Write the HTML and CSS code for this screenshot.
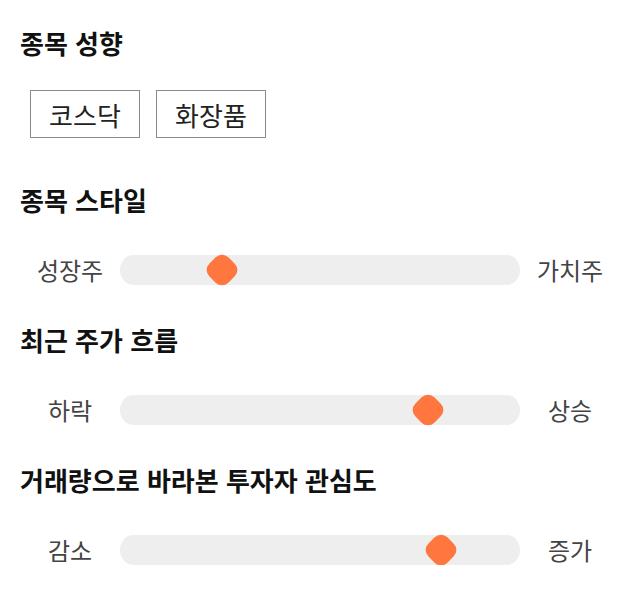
FILE: index.html
```html
<!DOCTYPE html>
<html lang="ko">
<head>
<meta charset="utf-8">
<title>종목 성향</title>
<link rel="stylesheet" href="styles.css">
</head>
<body>
<main class="page">
  <section class="block">
    <h2 class="title">종목 성향</h2>
    <div class="tags">
      <span class="tag">코스닥</span>
      <span class="tag">화장품</span>
    </div>
  </section>

  <section class="block block-gap">
    <h2 class="title">종목 스타일</h2>
    <div class="slider-row">
      <span class="label">성장주</span>
      <div class="track"><span class="thumb" style="left: 25.5%"></span></div>
      <span class="label">가치주</span>
    </div>
  </section>

  <section class="block">
    <h2 class="title">최근 주가 흐름</h2>
    <div class="slider-row">
      <span class="label">하락</span>
      <div class="track"><span class="thumb" style="left: 77%"></span></div>
      <span class="label">상승</span>
    </div>
  </section>

  <section class="block">
    <h2 class="title">거래량으로 바라본 투자자 관심도</h2>
    <div class="slider-row">
      <span class="label">감소</span>
      <div class="track"><span class="thumb" style="left: 80.25%"></span></div>
      <span class="label">증가</span>
    </div>
  </section>
</main>
</body>
</html>
```

FILE: styles.css
```css
html, body {
  margin: 0;
  padding: 0;
  background: #ffffff;
}

body {
  font-family: "Noto Sans CJK KR", "Noto Sans", sans-serif;
  color: #111111;
}

.page {
  display: flex;
  flex-direction: column;
  gap: 37px;
  padding: 25px 20px 0 20px;
}

.block {
  display: flex;
  flex-direction: column;
  gap: 37px;
}

.block-gap {
  margin-top: 7px;
}

.title {
  margin: 0;
  font-size: 26px;
  line-height: 36px;
  font-weight: 700;
  color: #111111;
}

.tags {
  display: flex;
  gap: 16px;
  padding-left: 10px;
  margin-top: -8px;
}

.tag {
  box-sizing: border-box;
  width: 110px;
  height: 48px;
  border: 1px solid #8a8a8a;
  display: flex;
  align-items: center;
  justify-content: center;
  font-size: 26px;
  color: #222222;
}

.slider-row {
  display: grid;
  grid-template-columns: 100px 400px 100px;
  align-items: center;
  height: 30px;
}

.label {
  text-align: center;
  font-size: 24px;
  line-height: 30px;
  color: #444444;
}

.track {
  position: relative;
  height: 30px;
  background: #eeeeee;
  border-radius: 13px / 15px;
}

.thumb {
  position: absolute;
  top: 50%;
  width: 27px;
  height: 27px;
  background: #ff763f;
  border-radius: 9px;
  transform: translate(-50%, -50%) rotate(45deg);
}
```
